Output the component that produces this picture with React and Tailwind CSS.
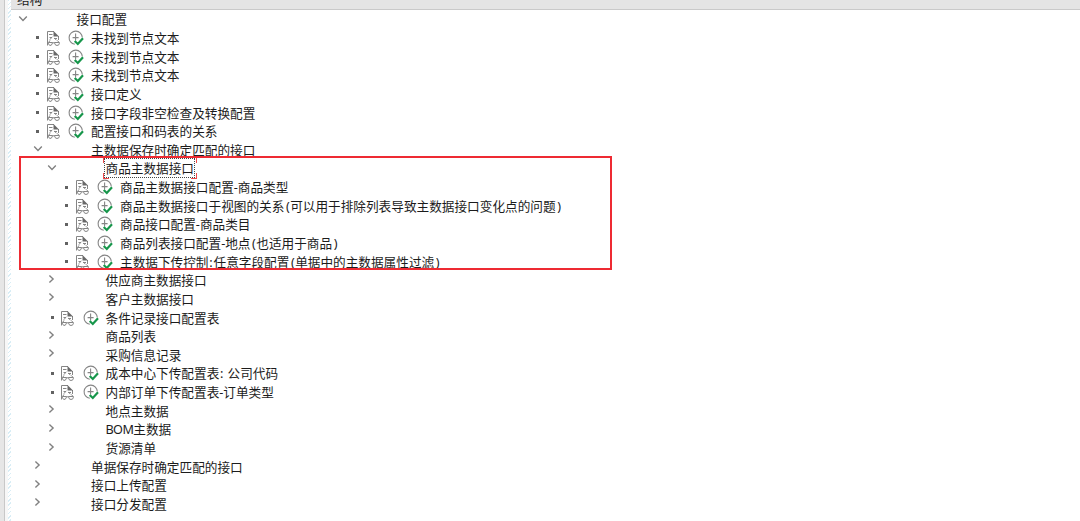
const rows = [
  { level: 0, type: 'open', text: '接口配置' },
  { level: 1, type: 'leaf', text: '未找到节点文本' },
  { level: 1, type: 'leaf', text: '未找到节点文本' },
  { level: 1, type: 'leaf', text: '未找到节点文本' },
  { level: 1, type: 'leaf', text: '接口定义' },
  { level: 1, type: 'leaf', text: '接口字段非空检查及转换配置' },
  { level: 1, type: 'leaf', text: '配置接口和码表的关系' },
  { level: 1, type: 'open', text: '主数据保存时确定匹配的接口' },
  { level: 2, type: 'open', text: '商品主数据接口', selected: true },
  { level: 3, type: 'leaf', text: '商品主数据接口配置-商品类型' },
  { level: 3, type: 'leaf', text: '商品主数据接口于视图的关系(可以用于排除列表导致主数据接口变化点的问题)' },
  { level: 3, type: 'leaf', text: '商品接口配置-商品类目' },
  { level: 3, type: 'leaf', text: '商品列表接口配置-地点(也适用于商品)' },
  { level: 3, type: 'leaf', text: '主数据下传控制:任意字段配置(单据中的主数据属性过滤)' },
  { level: 2, type: 'closed', text: '供应商主数据接口' },
  { level: 2, type: 'closed', text: '客户主数据接口' },
  { level: 2, type: 'leaf', text: '条件记录接口配置表' },
  { level: 2, type: 'closed', text: '商品列表' },
  { level: 2, type: 'closed', text: '采购信息记录' },
  { level: 2, type: 'leaf', text: '成本中心下传配置表: 公司代码' },
  { level: 2, type: 'leaf', text: '内部订单下传配置表-订单类型' },
  { level: 2, type: 'closed', text: '地点主数据' },
  { level: 2, type: 'closed', text: 'BOM主数据' },
  { level: 2, type: 'closed', text: '货源清单' },
  { level: 1, type: 'closed', text: '单据保存时确定匹配的接口' },
  { level: 1, type: 'closed', text: '接口上传配置' },
  { level: 1, type: 'closed', text: '接口分发配置' },
];

const indents = ['pl-[5px]', 'pl-[19.5px]', 'pl-[34px]', 'pl-[48.5px]'];

function Marker({ type }) {
  if (type === 'leaf') {
    return <span className="size-[3px] bg-[#626262]" />;
  }
  return (
    <svg
      viewBox="0 0 10 10"
      className="mb-[3px] size-[10px]"
      fill="none"
      stroke="#808080"
      strokeWidth="1.4"
    >
      <path d={type === 'open' ? 'M1.2 3.6 5 7.4 8.8 3.6' : 'M2.4 1.5 6.1 5 2.4 8.5'} />
    </svg>
  );
}

function DocumentIcon() {
  return (
    <svg viewBox="0 0 15 16" className="h-4 w-[15px] shrink-0" fill="none" stroke="#858585">
      <path d="M1.5 15.5V1.5H8M12.5 6v4" />
      <path d="M7.5 1 13 6.5H7.5z" fill="#686868" stroke="none" />
      <path d="M3 4.5h3.5M3.5 7.5h2.5M8 8.5h3M3.5 9.8 6.4 7M10.4 10 8 8" />
      <path d="M2.5 12.5 4 10.5M13 12.5 11.5 10.5M6 12.8h3" />
      <path d="M2.5 12.5h3.7v1.3l-1 1.5H3.5l-1-1.5zM8.8 12.5h4.5v1.3l-1 1.5H9.8l-1-1.5z" />
    </svg>
  );
}

function ExecuteIcon() {
  return (
    <svg viewBox="0 0 16 16" className="size-4 shrink-0" fill="none">
      <path
        d="M6.8 14.3A6.6 6.6 0 1 1 14.3 7.6M7.6 3.5v7M4.6 7.6h6"
        stroke="#858585"
        strokeWidth="1.1"
      />
      <path d="M6.7 11 9.8 14 15 8.2" stroke="#17964b" strokeWidth="2.2" />
    </svg>
  );
}

function SelectionFrame() {
  return (
    <>
      <span className="absolute -top-px -right-px -bottom-px -left-[2px] border border-dotted border-[#444]" />
      <span className="absolute -top-[2px] -left-[3px] size-[6px] border-t border-l border-[#f04a4a]" />
      <span className="absolute -top-[2px] -right-[3px] size-[6px] border-t border-r border-[#f04a4a]" />
      <span className="absolute -bottom-[2px] -left-[3px] size-[6px] border-b border-l border-[#f04a4a]" />
      <span className="absolute -right-[3px] -bottom-[2px] size-[6px] border-r border-b border-[#f04a4a]" />
    </>
  );
}

function Label({ text }) {
  return text.split(/([():]|BOM)/).map((part, i) => {
    if (part === 'BOM') {
      return <span key={i} className="tracking-[-0.6px]">{part}</span>;
    }
    if (part === '(' || part === ')') {
      return <span key={i} className="pr-[0.4px] pl-[1.6px]">{part}</span>;
    }
    if (part === ':') {
      return <span key={i} className="px-[0.8px]">{part}</span>;
    }
    return part;
  });
}

function TreeRow({ row }) {
  return (
    <div className={`flex h-[18.65px] items-center ${indents[row.level]}`}>
      <div className="flex w-[14px] shrink-0 items-center justify-center">
        <Marker type={row.type} />
      </div>
      <div className="flex w-[46.5px] shrink-0 items-center gap-[7.5px] pl-px">
        {row.type === 'leaf' && (
          <>
            <DocumentIcon />
            <ExecuteIcon />
          </>
        )}
      </div>
      <span className="relative leading-[18px] whitespace-pre">
        <Label text={row.text} />
        {row.selected && <SelectionFrame />}
      </span>
    </div>
  );
}

export default function App() {
  return (
    <div className="relative flex h-[521px] w-[1080px] overflow-hidden bg-white font-['Noto_Sans','Noto_Sans_CJK_SC',sans-serif] text-[12.65px] text-[#1c1c1c]">
      <div className="w-[5px] shrink-0 border-r border-[#c8c8c8] bg-[#e6e6e6]" />
      <div className="w-[3px] shrink-0 bg-[#f7f7f7]" />
      <div className="w-[3px] shrink-0 bg-[repeating-linear-gradient(135deg,#d8edf5_0_1px,#ffffff_1px_3px)]" />
      <div className="flex min-w-0 grow flex-col">
        <div className="flex h-[10px] shrink-0 items-end overflow-hidden border-b border-[#c9c9c9] bg-[#e4e4e4] pb-px pl-[6px]">
          <span className="leading-[18px]">结构</span>
        </div>
        <div className="flex flex-col">
          {rows.map((row, i) => (
            <TreeRow key={i} row={row} />
          ))}
        </div>
      </div>
      <div className="absolute top-[156px] left-[19px] h-[114px] w-[593px] border-2 border-[#ee2a32]" />
    </div>
  );
}
